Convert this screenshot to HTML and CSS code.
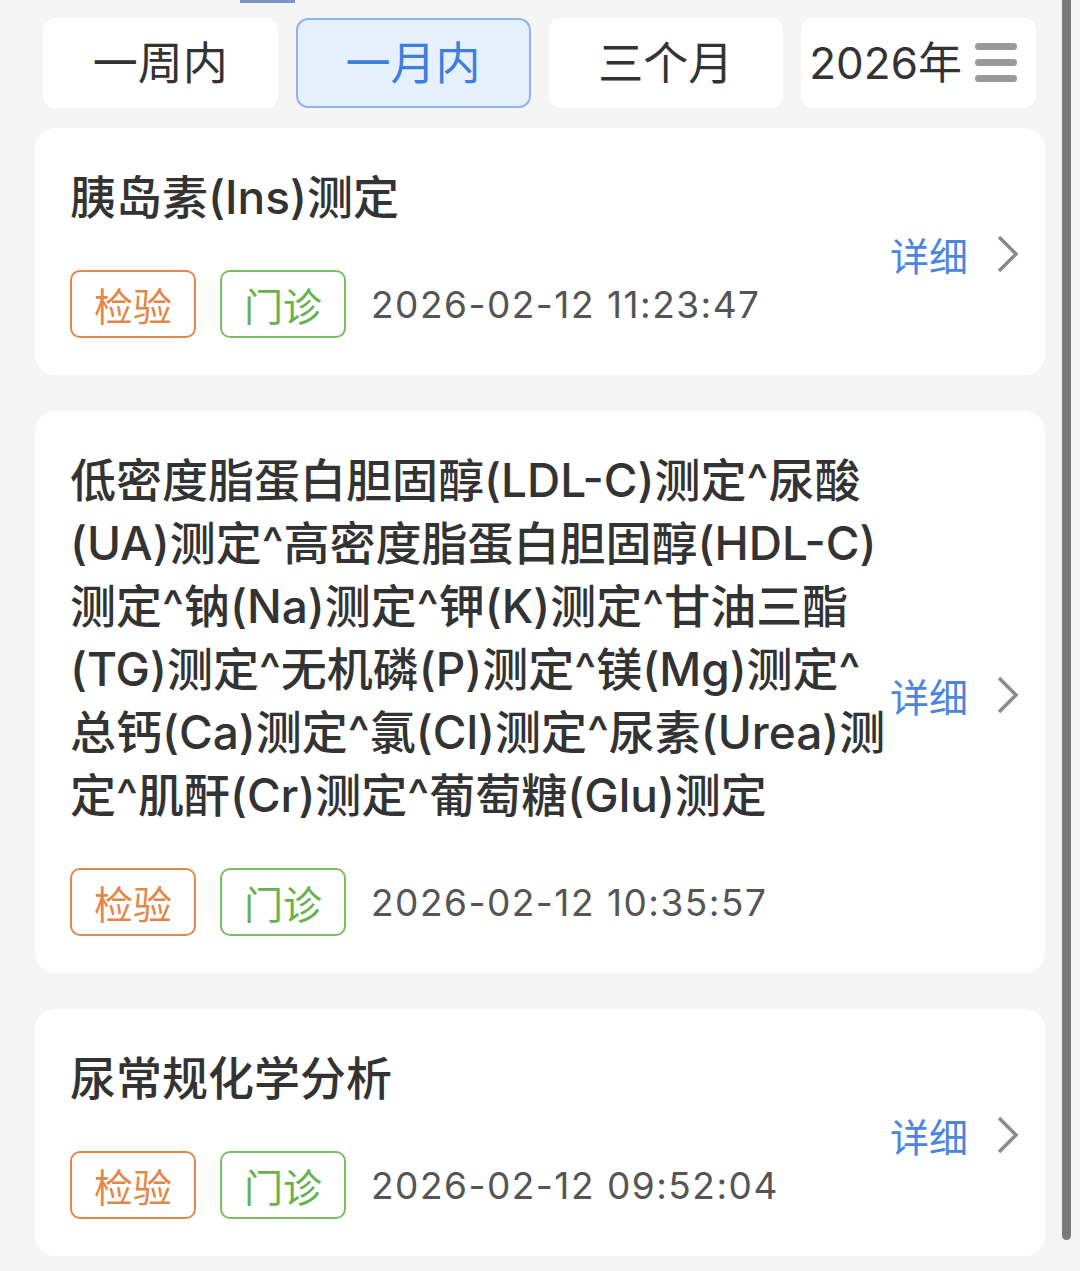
FILE: index.html
```html
<!DOCTYPE html>
<html lang="zh-CN">
<head>
  <meta charset="UTF-8">
  <meta name="viewport" content="width=device-width, initial-scale=1.0">
  <title>检查报告</title>
  <link rel="stylesheet" href="styles.css">
</head>
<body>
  <div class="top-mark"></div>
  <div class="scroll-bar"></div>

  <div class="tabs">
    <div class="tab">一周内</div>
    <div class="tab active">一月内</div>
    <div class="tab">三个月</div>
    <div class="tab year"><span class="year-text">2026年</span>
      <span class="menu-icon"><i></i><i></i><i></i></span>
    </div>
  </div>

  <main class="list">
    <div class="card">
      <div class="card-main">
        <h3 class="card-title">胰岛素(Ins)测定</h3>
        <div class="card-meta">
          <span class="tag tag-orange">检验</span>
          <span class="tag tag-green">门诊</span>
          <span class="date">2026-02-12 11:23:47</span>
        </div>
      </div>
      <div class="card-more">详细 <svg class="chevron" viewBox="0 0 24 40"><path d="M3 3 L20 20 L3 37" /></svg></div>
    </div>

    <div class="card">
      <div class="card-main">
        <h3 class="card-title">低密度脂蛋白胆固醇(LDL-C)测定^尿酸(UA)测定^高密度脂蛋白胆固醇(HDL-C)测定^钠(Na)测定^钾(K)测定^甘油三酯(TG)测定^无机磷(P)测定^镁(Mg)测定^总钙(Ca)测定^氯(Cl)测定^尿素(Urea)测定^肌酐(Cr)测定^葡萄糖(Glu)测定</h3>
        <div class="card-meta">
          <span class="tag tag-orange">检验</span>
          <span class="tag tag-green">门诊</span>
          <span class="date">2026-02-12 10:35:57</span>
        </div>
      </div>
      <div class="card-more">详细 <svg class="chevron" viewBox="0 0 24 40"><path d="M3 3 L20 20 L3 37" /></svg></div>
    </div>

    <div class="card">
      <div class="card-main">
        <h3 class="card-title">尿常规化学分析</h3>
        <div class="card-meta">
          <span class="tag tag-orange">检验</span>
          <span class="tag tag-green">门诊</span>
          <span class="date">2026-02-12 09:52:04</span>
        </div>
      </div>
      <div class="card-more">详细 <svg class="chevron" viewBox="0 0 24 40"><path d="M3 3 L20 20 L3 37" /></svg></div>
    </div>
  </main>
</body>
</html>
```

FILE: styles.css
```css
body { margin:0; padding:0; background:#f5f5f5; font-family:Inter, "Noto Sans CJK SC", sans-serif; color:#333; width:1080px; height:1271px; overflow:hidden; position:relative; }

.top-mark { position:absolute; top:0; left:240px; width:55px; height:3px; background:#7d93c4; }
.scroll-bar { position:absolute; top:0; left:1062px; width:9px; height:1240px; background:#7a7a7a; border-radius:0 0 5px 5px; }

.tabs { display:grid; grid-template-columns:repeat(4, 1fr); gap:18px; padding:18px 44px 0 43px; }
.tab { height:90px; box-sizing:border-box; background:#fff; border-radius:12px; display:flex; align-items:center; justify-content:center; font-size:45px; color:#333; white-space:nowrap; padding-bottom:6px; }
.tab.active { background:#e6f1fd; border:2px solid #8eb6ec; color:#3d7fe0; }
.tab.year { justify-content:flex-start; gap:13px; font-size:44px; padding-bottom:2px; }
.year-text { margin-left:8px; margin-bottom:4px; }
.menu-icon { display:flex; flex-direction:column; gap:9px; }
.menu-icon i { display:block; width:42px; height:7px; border-radius:4px; background:#999; }

.list { padding:20px 35px 0 35px; display:flex; flex-direction:column; gap:36px; }
.card { background:#fff; border-radius:20px; display:flex; align-items:center; padding:38px 25px 37px 35px; }
.card-main { flex:1; min-width:0; }
.card-title { margin:0; font-size:46px; line-height:63px; font-weight:500; color:#333; }
.card-meta { display:flex; align-items:center; gap:24px; margin-top:41px; }
.tag { display:flex; align-items:center; justify-content:center; box-sizing:border-box; width:126px; height:68px; border:2px solid; border-radius:10px; font-size:39px; }
.tag-orange { color:#e2874a; border-color:#e2874a; }
.tag-green { color:#67b24f; border-color:#78bf62; }
.date { font-size:37px; letter-spacing:1.5px; color:#555; margin-left:1px; }

.card-more { display:flex; align-items:center; gap:28px; font-size:39px; color:#4a86e0; flex-shrink:0; margin-top:4px; }
.chevron { width:24px; height:40px; }
.chevron path { fill:none; stroke:#8a8a8a; stroke-width:3.5; }
```
